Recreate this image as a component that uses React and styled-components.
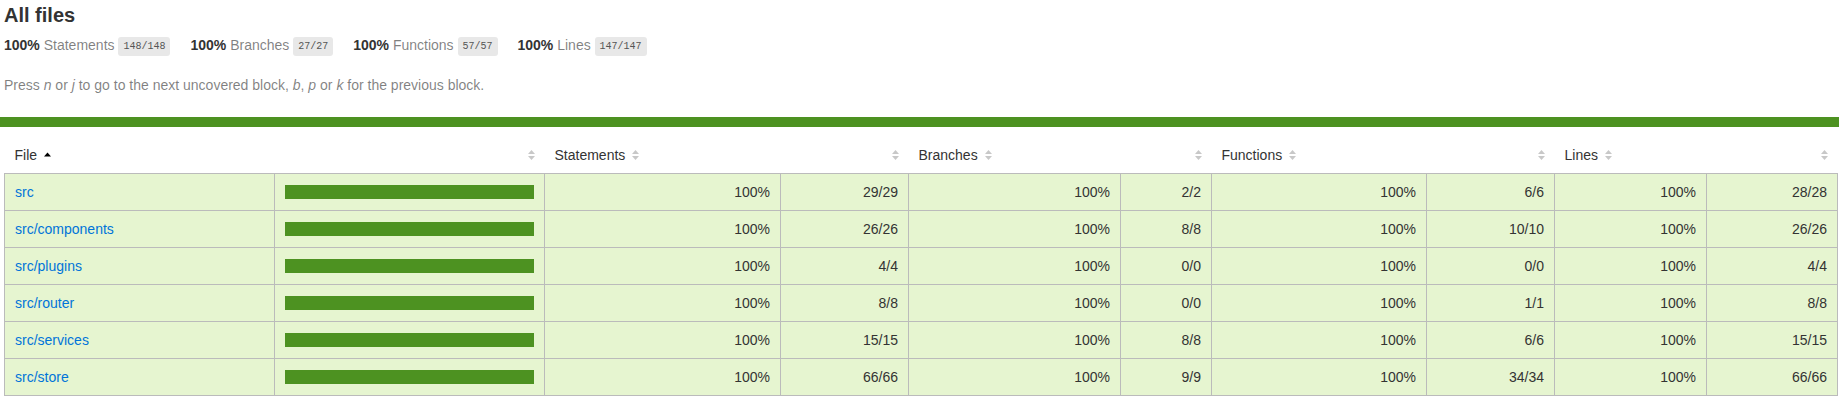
import React from "react";
import styled, { createGlobalStyle } from "styled-components";

const GlobalStyle = createGlobalStyle`
  *, *:after, *:before {
    box-sizing: border-box;
  }
  html {
    overflow: hidden;
  }
  body {
    margin: 0;
    padding: 0;
    background: #fff;
    font-family: "Liberation Sans", Arial, Helvetica, sans-serif;
    font-size: 14px;
    color: #333;
  }
`;

const summary = [
  { label: "Statements", fraction: "148/148" },
  { label: "Branches", fraction: "27/27" },
  { label: "Functions", fraction: "57/57" },
  { label: "Lines", fraction: "147/147" },
];

const files = [
  { name: "src", s: "29/29", b: "2/2", f: "6/6", l: "28/28" },
  { name: "src/components", s: "26/26", b: "8/8", f: "10/10", l: "26/26" },
  { name: "src/plugins", s: "4/4", b: "0/0", f: "0/0", l: "4/4" },
  { name: "src/router", s: "8/8", b: "0/0", f: "1/1", l: "8/8" },
  { name: "src/services", s: "15/15", b: "8/8", f: "6/6", l: "15/15" },
  { name: "src/store", s: "66/66", b: "9/9", f: "34/34", l: "66/66" },
];

// border-to-border widths of each column
const colWidths = [270, 270, 236, 128, 212, 91, 215, 128, 152, 131];

const Sorter = ({ sorted }) => (
  <SorterIcon width="7" height="10" viewBox="0 0 7 10">
    {sorted ? (
      <polygon points="0,6.5 3.5,2.5 7,6.5" fill="#000" />
    ) : (
      <>
        <polygon points="0,4 3.5,0 7,4" fill="#c8c8c8" />
        <polygon points="0,6 7,6 3.5,10" fill="#c8c8c8" />
      </>
    )}
  </SorterIcon>
);

const App = () => {
  return (
    <>
      <GlobalStyle />
      <Header>
        <Title>All files</Title>
        <Stats>
          {summary.map((item) => (
            <Stat key={item.label}>
              <Strong>100% </Strong> <Quiet>{item.label}</Quiet>{" "}
              <Fraction>{item.fraction}</Fraction>
            </Stat>
          ))}
        </Stats>
        <Hint>
          Press <em>n</em> or <em>j</em> to go to the next uncovered block,{" "}
          <em>b</em>, <em>p</em> or <em>k</em> for the previous block.
        </Hint>
      </Header>
      <StatusLine />
      <TableWrap>
        <Table>
          <colgroup>
            {colWidths.map((w, i) => (
              <Col key={i} $w={w} />
            ))}
          </colgroup>
          <thead>
            <tr>
              <Th>
                File
                <Sorter sorted />
              </Th>
              <Th $align="right">
                <Sorter />
              </Th>
              <Th>
                Statements
                <Sorter />
              </Th>
              <Th $align="right">
                <Sorter />
              </Th>
              <Th>
                Branches
                <Sorter />
              </Th>
              <Th $align="right">
                <Sorter />
              </Th>
              <Th>
                Functions
                <Sorter />
              </Th>
              <Th $align="right">
                <Sorter />
              </Th>
              <Th>
                Lines
                <Sorter />
              </Th>
              <Th $align="right">
                <Sorter />
              </Th>
            </tr>
          </thead>
          <Tbody>
            {files.map((row) => (
              <Tr key={row.name}>
                <Td>
                  <FileLink href="#">{row.name}</FileLink>
                </Td>
                <Td>
                  <Chart>
                    <CoverFill style={{ width: "100%" }} />
                  </Chart>
                </Td>
                <Td $align="right">100%</Td>
                <Td $align="right">{row.s}</Td>
                <Td $align="right">100%</Td>
                <Td $align="right">{row.b}</Td>
                <Td $align="right">100%</Td>
                <Td $align="right">{row.f}</Td>
                <Td $align="right">100%</Td>
                <Td $align="right">{row.l}</Td>
              </Tr>
            ))}
          </Tbody>
        </Table>
      </TableWrap>
    </>
  );
};

export default App;

const Header = styled.div`
  padding: 4px 10px 10px 4px;
`;

const Title = styled.h1`
  font-size: 20px;
  font-weight: bold;
  margin: 0;
`;

const Stats = styled.div`
  display: flex;
`;

const Stat = styled.div`
  padding: 10px 20px 10px 0;
`;

const Strong = styled.span`
  font-weight: bold;
`;

const Quiet = styled.span`
  color: rgba(0, 0, 0, 0.5);
`;

const Fraction = styled.span`
  font-family: "Liberation Mono", Consolas, monospace;
  font-size: 10px;
  color: #555;
  background: #e8e8e8;
  padding: 4px 5px;
  border-radius: 3px;
  vertical-align: middle;
`;

const Hint = styled.p`
  color: rgba(0, 0, 0, 0.5);
  margin: 14px 0;
`;

const StatusLine = styled.div`
  height: 10px;
  background: rgb(77, 146, 33);
`;

const TableWrap = styled.div`
  padding: 10px 2px 0 4px;
`;

const Table = styled.table`
  border-collapse: collapse;
  table-layout: fixed;
  width: 100%;
  margin: 0;
`;

const Col = styled.col`
  width: ${(p) => p.$w}px;
`;

const Th = styled.th`
  padding: 10px;
  font-weight: normal;
  white-space: nowrap;
  text-align: ${(p) => p.$align || "left"};
`;

const SorterIcon = styled.svg`
  display: inline-block;
  margin-left: 0.5em;
  vertical-align: baseline;
`;

const Tbody = styled.tbody`
  border: 1px solid #bbb;
`;

const Tr = styled.tr`
  border-bottom: 1px solid #bbb;
`;

const Td = styled.td`
  padding: 10px;
  border-right: 1px solid #bbb;
  background: rgb(230, 245, 208);
  white-space: nowrap;
  text-align: ${(p) => p.$align || "left"};
  &:last-child {
    border-right: none;
  }
`;

const FileLink = styled.a`
  color: #0074d9;
  text-decoration: none;
`;

const Chart = styled.div`
  line-height: 0;
  border: 1px solid rgb(77, 146, 33);
`;

const CoverFill = styled.div`
  display: inline-block;
  height: 12px;
  background: rgb(77, 146, 33);
`;
